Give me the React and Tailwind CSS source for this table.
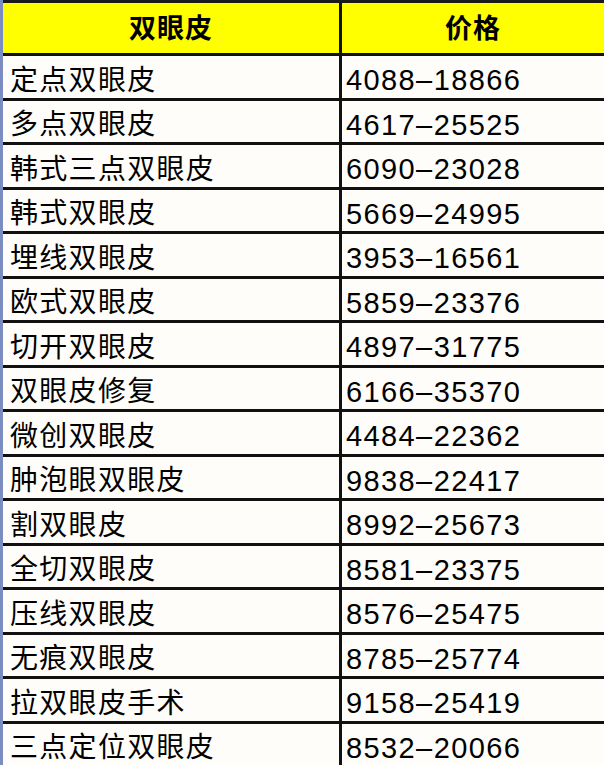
import React from 'react'

const rows = [
  ['定点双眼皮', '4088–18866'],
  ['多点双眼皮', '4617–25525'],
  ['韩式三点双眼皮', '6090–23028'],
  ['韩式双眼皮', '5669–24995'],
  ['埋线双眼皮', '3953–16561'],
  ['欧式双眼皮', '5859–23376'],
  ['切开双眼皮', '4897–31775'],
  ['双眼皮修复', '6166–35370'],
  ['微创双眼皮', '4484–22362'],
  ['肿泡眼双眼皮', '9838–22417'],
  ['割双眼皮', '8992–25673'],
  ['全切双眼皮', '8581–23375'],
  ['压线双眼皮', '8576–25475'],
  ['无痕双眼皮', '8785–25774'],
  ['拉双眼皮手术', '9158–25419'],
  ['三点定位双眼皮', '8532–20066'],
]

export default function App() {
  return (
    <div
      className="w-[604px] h-[765px] overflow-hidden bg-[#fffdf9] text-black border-l-[3px] border-[#7b8cc0]"
      style={{ fontFamily: '"Liberation Sans", "Noto Sans CJK SC", sans-serif' }}
    >
      <div className="grid grid-cols-[339px_1fr] h-[53px] bg-[#ffff00] border-t-[3px] border-[#1a1a1a]">
        <div className="flex items-center justify-center border-r-[3px] border-[#111] font-bold text-[27px] tracking-[1px] pt-[2px]">
          双眼皮
        </div>
        <div className="flex items-center justify-center font-bold text-[27px] tracking-[1px] pt-[2px]">
          价格
        </div>
      </div>
      {rows.map(([name, price]) => (
        <div key={name} className="grid grid-cols-[339px_1fr] h-[44.5px] border-t-[3px] border-[#111]">
          <div className="flex items-center pl-[7px] pt-[3px] border-r-[3px] border-[#111] text-[28px] tracking-[1.3px]">
            {name}
          </div>
          <div className="flex items-center pl-[4px] pt-[3px] text-[29px] tracking-[1.4px]">
            {price}
          </div>
        </div>
      ))}
    </div>
  )
}
